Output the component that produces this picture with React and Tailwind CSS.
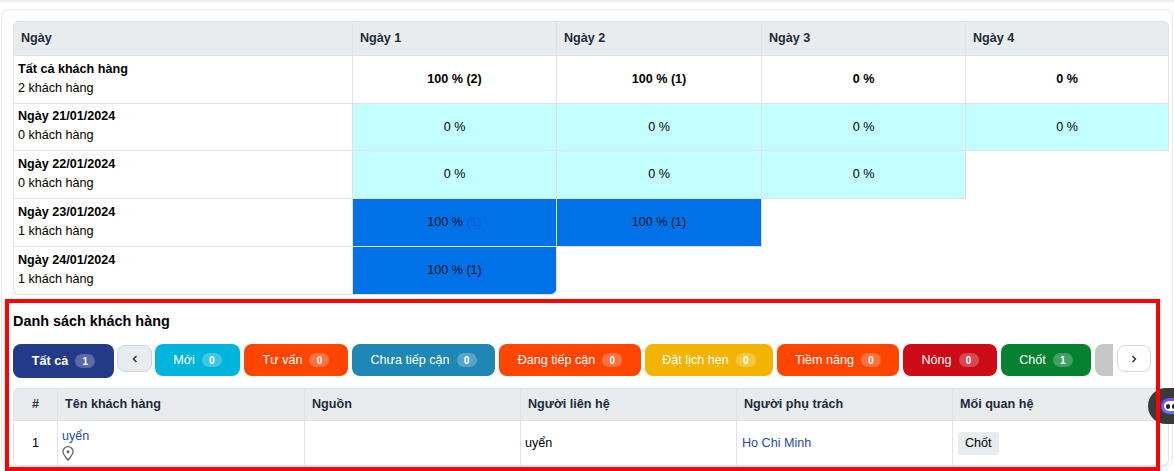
import React from 'react';

const pills = [
  { label: 'Mới', count: 0, cls: 'w-[85px] bg-[#00b5dc]' },
  { label: 'Tư vấn', count: 0, cls: 'w-[104px] bg-[#ff4500]' },
  { label: 'Chưa tiếp cận', count: 0, cls: 'w-[143px] bg-[#1e87b4]' },
  { label: 'Đang tiếp cận', count: 0, cls: 'w-[142px] bg-[#ff4500]' },
  { label: 'Đặt lịch hẹn', count: 0, cls: 'w-[128px] bg-[#f2b400]' },
  { label: 'Tiềm năng', count: 0, cls: 'w-[122px] bg-[#ff4500]' },
  { label: 'Nóng', count: 0, cls: 'w-[94px] bg-[#cd0a18]' },
  { label: 'Chốt', count: 1, cls: 'w-[90px] bg-[#05812f]' },
];

const rows = [
  { name: 'Ngày 21/01/2024', sub: '0 khách hàng', cells: ['0 %', '0 %', '0 %', '0 %'], h: 'h-[47px]' },
  { name: 'Ngày 22/01/2024', sub: '0 khách hàng', cells: ['0 %', '0 %', '0 %'], h: 'h-[48px]' },
  { name: 'Ngày 23/01/2024', sub: '1 khách hàng', cells: ['100 %', '100 % (1)'], h: 'h-[48px]' },
  { name: 'Ngày 24/01/2024', sub: '1 khách hàng', cells: ['100 % (1)'], h: 'h-[48px]' },
];

const Badge = ({ n }) => (
  <span className="ml-[7px] inline-flex h-[14px] min-w-[20px] items-center justify-center rounded-full bg-white/25 px-[6px] text-[10px] font-bold text-white">
    {n}
  </span>
);

const App = () => {
  const lineCls = 'border-b border-r border-[#dee2e6]';
  const thCls = `${lineCls} border-t bg-[#e9ecef] px-[7px] text-left text-[12.6px] font-bold text-[#212b3a]`;

  return (
    <div className="h-[471px] w-[1174px] overflow-hidden bg-white font-['Liberation_Sans',Arial,sans-serif] text-[12.6px] leading-[19px] text-black">
      <div className="h-[2px] bg-[#efefef]" />
      <div className="relative mx-[1px] mt-[7px] rounded-lg border border-[#eaeaea] px-[11px] pt-[11px]">
        {/* retention table */}
        <table className="w-[1156px] table-fixed border-separate border-spacing-0">
          <colgroup>
            <col className="w-[340px]" />
            <col className="w-[204px]" />
            <col className="w-[205px]" />
            <col className="w-[204px]" />
            <col className="w-[203px]" />
          </colgroup>
          <thead>
            <tr className="h-[35px]">
              {['Ngày', 'Ngày 1', 'Ngày 2', 'Ngày 3', 'Ngày 4'].map((t, i) => (
                <th
                  key={t}
                  className={
                    i === 0 ? `${thCls} rounded-tl-md border-l`
                    : i === 4 ? `${thCls} rounded-tr-md`
                    : thCls
                  }
                >
                  {t}
                </th>
              ))}
            </tr>
          </thead>
          <tbody>
            <tr className="h-[48px]">
              <td className={`${lineCls} border-l px-[4px] pb-[2px]`}>
                <div className="font-bold">Tất cả khách hàng</div>
                <div>2 khách hàng</div>
              </td>
              {['100 % (2)', '100 % (1)', '0 %', '0 %'].map((t, i) => (
                <td key={i} className={`${lineCls} text-center font-bold`}>{t}</td>
              ))}
            </tr>
            {rows.map((r, ri) => (
              <tr key={r.name} className={r.h}>
                <td className={ri === 3 ? `${lineCls} rounded-bl-md border-l px-[4px] pb-[2px]` : `${lineCls} border-l px-[4px] pb-[2px]`}>
                  <div className="font-bold">{r.name}</div>
                  <div>{r.sub}</div>
                </td>
                {r.cells.map((t, i) => {
                  const blue = t.startsWith('100');
                  return (
                    <td
                      key={i}
                      className={blue
                        ? `${lineCls} bg-[#0071e6] text-center text-[#0c1420] ${ri === 3 ? 'rounded-br-md' : ''}`
                        : `${lineCls} bg-[#c4ffff] text-center`}
                    >
                      {t === '100 %' ? <>100 % <span className="text-[#0a5ad2]">(1)</span></> : t}
                    </td>
                  );
                })}
                {Array.from({ length: 4 - r.cells.length }).map((_, i) => (
                  <td key={i} />
                ))}
              </tr>
            ))}
          </tbody>
        </table>

        {/* customer list */}
        <h3 className="mt-[16px] text-[14.4px] font-bold leading-[20px]">Danh sách khách hàng</h3>

        <div className="mt-[13px] flex items-start">
          <div className="flex h-[34px] w-[101px] items-center justify-center rounded-lg bg-[#223a87] font-bold text-white">
            Tất cả
            <Badge n={1} />
          </div>
          <button className="ml-[3px] mt-[1px] flex h-[27px] w-[35px] items-center justify-center rounded-lg border border-[#ced4da] bg-[#e9ecef]">
            <svg width="8" height="8" viewBox="0 0 8 8" fill="none" stroke="#212b3a" strokeWidth="1.4"><path d="M5.5 1 2.5 4l3 3" /></svg>
          </button>
          <div className="ml-[3px] flex w-[958px] gap-[4px] overflow-hidden">
            {pills.map((p) => (
              <div key={p.label} className={`flex h-[32px] shrink-0 items-center justify-center rounded-lg text-white ${p.cls}`}>
                {p.label}
                <Badge n={p.count} />
              </div>
            ))}
            <div className="h-[32px] w-[60px] shrink-0 rounded-lg bg-[#c6c6c6]" />
          </div>
          <button className="ml-[4px] mt-[1px] flex h-[27px] w-[34px] items-center justify-center rounded-lg border border-[#d8d8d8] bg-white">
            <svg width="8" height="8" viewBox="0 0 8 8" fill="none" stroke="#212b3a" strokeWidth="1.4"><path d="M2.5 1l3 3-3 3" /></svg>
          </button>
        </div>

        <table className="mt-[10px] w-[1156px] table-fixed border-separate border-spacing-0">
          <colgroup>
            <col className="w-[45px]" />
            <col className="w-[247px]" />
            <col className="w-[216px]" />
            <col className="w-[216px]" />
            <col className="w-[216px]" />
            <col className="w-[216px]" />
          </colgroup>
          <thead>
            <tr className="h-[33px]">
              <th className={`${thCls} rounded-tl-md border-l !text-center`}>#</th>
              {['Tên khách hàng', 'Nguồn', 'Người liên hệ', 'Người phụ trách'].map((t) => (
                <th key={t} className={thCls}>{t}</th>
              ))}
              <th className={`${thCls} rounded-tr-md`}>Mối quan hệ</th>
            </tr>
          </thead>
          <tbody>
            <tr className="h-[45px]">
              <td className={`${lineCls} rounded-bl-md border-l text-center`}>1</td>
              <td className={`${lineCls} px-[4px] pt-[6px] align-top`}>
                <a className="block text-[#2a4a9f]">uyển</a>
                <svg className="block" width="12" height="15" viewBox="0 0 12 15" fill="none" stroke="#666" strokeWidth="1.3">
                  <path d="M6 14.2C4 11 .9 8.8.9 5.8a5.1 5.1 0 0 1 10.2 0C11.1 8.8 8 11 6 14.2Z" />
                  <circle cx="6" cy="5.8" r="1.5" fill="#666" stroke="none" />
                </svg>
              </td>
              <td className={lineCls} />
              <td className={`${lineCls} px-[4px]`}>uyển</td>
              <td className={`${lineCls} px-[5px] text-[#2a4a9f]`}>Ho Chi Minh</td>
              <td className={`${lineCls} rounded-br-md px-[5px]`}>
                <span className="inline-block rounded-[3px] bg-[#e9ecef] px-[7px] py-[2px]">Chốt</span>
              </td>
            </tr>
          </tbody>
        </table>
      </div>

      {/* annotation and chat widget sit above the page */}
      <div className="absolute left-[1148px] top-[388px] flex h-[36px] w-[26px] items-center overflow-hidden rounded-l-full bg-[#3a3a3a] pl-[13px]">
        <div className="h-[16px] w-[26px] shrink-0 rounded-full bg-gradient-to-br from-[#8a2cf5] to-[#2a8cff] p-[3px]">
          <div className="flex h-full items-center gap-[2px] rounded-full bg-white pl-[2px]">
            <span className="h-[5px] w-[4px] rounded-full bg-[#222]" />
            <span className="h-[5px] w-[4px] rounded-full bg-[#222]" />
          </div>
        </div>
      </div>
      <div className="pointer-events-none absolute left-[5px] top-[299px] h-[172px] w-[1155px] border-[4px] border-[#ff0000]" />
    </div>
  );
};

export default App;
